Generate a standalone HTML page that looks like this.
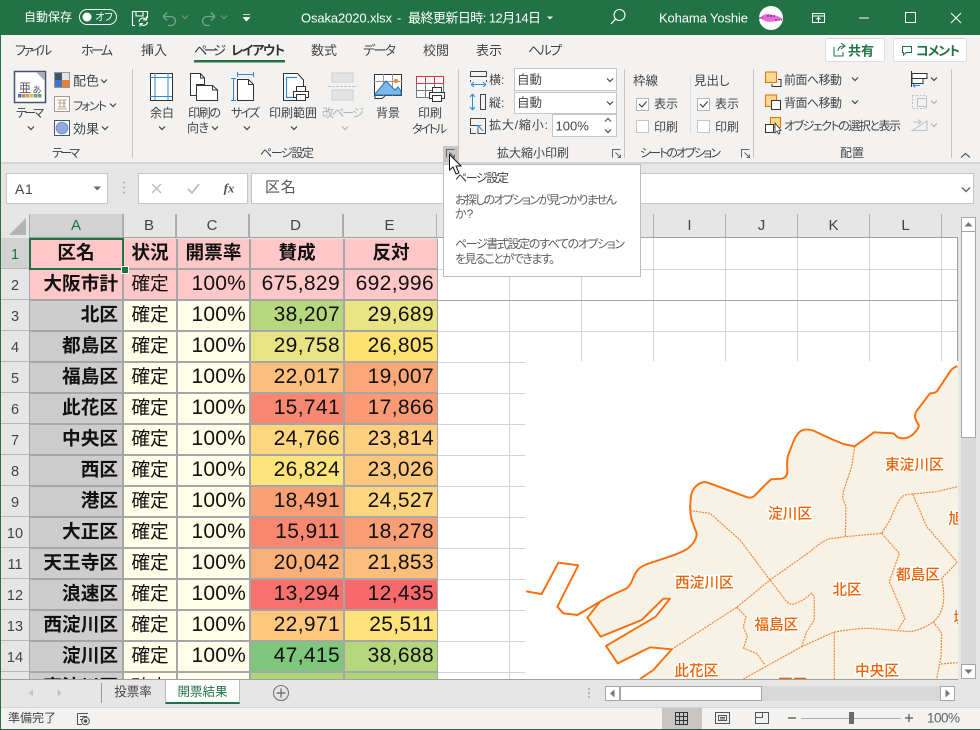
<!DOCTYPE html>
<html lang="ja"><head><meta charset="utf-8"><title>Osaka2020.xlsx</title>
<style>
html,body{margin:0;padding:0;width:980px;height:730px;overflow:hidden;background:#e6e6e6}
body{position:relative;font-family:"Liberation Sans","Noto Sans CJK JP",sans-serif}
svg{position:absolute;left:0;top:0;display:block}
svg text{font-family:"Liberation Sans","Noto Sans CJK JP",sans-serif;dominant-baseline:central;font-feature-settings:"palt";fill:#444;font-size:12px}
.m{text-anchor:middle}
.w{fill:#fff}
.g{fill:#b1b1b1}
.box{position:absolute;background:#fff;border:1px solid #c6c6c6;box-sizing:border-box}
#grid{position:absolute;left:30px;top:239px;width:408px;height:440px;overflow:hidden;background:#a6a6a6}
#cells{display:grid;grid-template-columns:92px 52px 71px 92px 92px;grid-auto-rows:29px;gap:2px;width:407px;margin-left:0}
#cells div{line-height:27px;white-space:nowrap;font-size:18.67px;color:#111;overflow:hidden;font-family:"Liberation Sans","Noto Sans CJK JP",sans-serif}
.k{background:#cdcdcd;font-weight:700;text-align:right;padding-right:4px}
.s{background:#ffffe9;text-align:center}
.p{background:#ffffe9;text-align:right;padding-right:3px;font-size:21px!important;letter-spacing:.2px}
.n{text-align:right;padding-right:3px;font-size:21px!important;letter-spacing:.35px}
.hd{background:#ffc7c7!important;font-weight:700;text-align:center;padding:0!important}
.pk{background:#ffc7c7!important}
.rh{position:absolute;left:1px;width:28px;height:31px;background:#e6e6e6;border-bottom:1px solid #b8b8b8;box-sizing:border-box;text-align:center;font-size:14.5px;line-height:35px;color:#444}
.ch{position:absolute;top:214px;height:24px;line-height:23px;text-align:center;font-size:15px;color:#444;background:#e6e6e6;border-right:1px solid #b0b0b0;box-sizing:border-box}
#tip{position:absolute;left:443px;top:164px;width:198px;height:113px;background:#fff;border:1px solid #bdbdbd;box-sizing:border-box}
</style></head>
<body>
<!-- ribbon + title background -->
<div style="position:absolute;left:0;top:0;width:980px;height:35px;background:#217346"></div>
<div style="position:absolute;left:0;top:35px;width:980px;height:127px;background:#f3f2f1"></div>
<div style="position:absolute;left:0;top:162px;width:980px;height:2px;background:#d4d4d4"></div>

<!-- formula bar -->
<div class="box" style="left:6px;top:173px;width:102px;height:31px;font-size:14px;line-height:30px;padding-left:8px;color:#444;letter-spacing:.6px">A1</div>
<div class="box" style="left:138px;top:173px;width:110px;height:31px"></div>
<div class="box" style="left:251px;top:173px;width:723px;height:31px;font-size:15px;line-height:27px;padding-left:13px;color:#555;letter-spacing:.8px">区名</div>

<!-- column headers -->
<div class="ch" style="left:30px;width:93px;background:#d2d2d2;color:#217346">A</div>
<div class="ch" style="left:123px;width:53px">B</div>
<div class="ch" style="left:176px;width:73px">C</div>
<div class="ch" style="left:249px;width:94px">D</div>
<div class="ch" style="left:343px;width:94px">E</div>
<div class="ch" style="left:437px;width:73px"></div>
<div class="ch" style="left:510px;width:72px"></div>
<div class="ch" style="left:582px;width:72px"></div>
<div class="ch" style="left:654px;width:72px">I</div>
<div class="ch" style="left:726px;width:72px">J</div>
<div class="ch" style="left:798px;width:72px">K</div>
<div class="ch" style="left:870px;width:72px">L</div>

<!-- row headers -->
<div class="rh" style="top:238px;background:#d2d2d2;color:#217346">1</div>
<div class="rh" style="top:269px">2</div>
<div class="rh" style="top:300px">3</div>
<div class="rh" style="top:331px">4</div>
<div class="rh" style="top:362px">5</div>
<div class="rh" style="top:393px">6</div>
<div class="rh" style="top:424px">7</div>
<div class="rh" style="top:455px">8</div>
<div class="rh" style="top:486px">9</div>
<div class="rh" style="top:517px">10</div>
<div class="rh" style="top:548px">11</div>
<div class="rh" style="top:579px">12</div>
<div class="rh" style="top:610px">13</div>
<div class="rh" style="top:641px">14</div>
<div class="rh" style="top:672px;height:8px"></div>

<!-- white sheet -->
<div style="position:absolute;left:438px;top:238px;width:520px;height:441px;background:#fff"></div>
<svg width="980" height="730" viewBox="0 0 980 730" style="pointer-events:none">
<g stroke="#d4d4d4" stroke-width="1">
<path d="M438 269.500H957M438 331.500H957M438 362.500H525M438 393.500H525M438 424.500H525M438 455.500H525M438 486.500H525M438 517.500H525M438 548.500H525M438 579.500H525M438 610.500H525M438 641.500H525M438 672.500H525"/>
<path d="M509.500 238V679M581.500 238V362M653.500 238V362M725.500 238V362M797.500 238V362M869.500 238V362M941.500 238V362"/>
</g>
<path d="M438 300.500H957" stroke="#a6a6a6" fill="none"/>
<path d="M29 237.500H958M957.500 238V679" stroke="#a0a0a0" fill="none"/>
<path d="M29.500 214V680" stroke="#a8a8a8" fill="none"/>
</svg>

<!-- data grid -->
<div id="grid"><div id="cells">
<div class="hd">区名</div><div class="hd">状況</div><div class="hd">開票率</div><div class="hd">賛成</div><div class="hd">反対</div>
<div class="k pk">大阪市計</div><div class="s pk">確定</div><div class="p pk">100%</div><div class="n pk">675,829</div><div class="n pk">692,996</div>
<div class="k">北区</div><div class="s">確定</div><div class="p">100%</div><div class="n" style="background:#b7d77f">38,207</div><div class="n" style="background:#e9e483">29,689</div>
<div class="k">都島区</div><div class="s">確定</div><div class="p">100%</div><div class="n" style="background:#e9e483">29,758</div><div class="n" style="background:#fde272">26,805</div>
<div class="k">福島区</div><div class="s">確定</div><div class="p">100%</div><div class="n" style="background:#fdc07c">22,017</div><div class="n" style="background:#fca777">19,007</div>
<div class="k">此花区</div><div class="s">確定</div><div class="p">100%</div><div class="n" style="background:#fa8771">15,741</div><div class="n" style="background:#fb9a75">17,866</div>
<div class="k">中央区</div><div class="s">確定</div><div class="p">100%</div><div class="n" style="background:#fed67e">24,766</div><div class="n" style="background:#fdcf7e">23,814</div>
<div class="k">西区</div><div class="s">確定</div><div class="p">100%</div><div class="n" style="background:#fde47b">26,824</div><div class="n" style="background:#fdc87d">23,026</div>
<div class="k">港区</div><div class="s">確定</div><div class="p">100%</div><div class="n" style="background:#fb9f75">18,491</div><div class="n" style="background:#fed47e">24,527</div>
<div class="k">大正区</div><div class="s">確定</div><div class="p">100%</div><div class="n" style="background:#fa8871">15,911</div><div class="n" style="background:#fb9d75">18,278</div>
<div class="k">天王寺区</div><div class="s">確定</div><div class="p">100%</div><div class="n" style="background:#fcb079">20,042</div><div class="n" style="background:#fdbd7b">21,853</div>
<div class="k">浪速区</div><div class="s">確定</div><div class="p">100%</div><div class="n" style="background:#f8716c">13,294</div><div class="n" style="background:#f8696b">12,435</div>
<div class="k">西淀川区</div><div class="s">確定</div><div class="p">100%</div><div class="n" style="background:#fdc77d">22,971</div><div class="n" style="background:#fee27a">25,511</div>
<div class="k">淀川区</div><div class="s">確定</div><div class="p">100%</div><div class="n" style="background:#7fc77d">47,415</div><div class="n" style="background:#b4d77e">38,688</div>
<div class="k">東淀川区</div><div class="s">確定</div><div class="p"></div><div class="n" style="background:#aed47d"></div><div class="n" style="background:#aed47d"></div>
</div></div>
<!-- selection -->
<div style="position:absolute;left:29px;top:238px;width:95px;height:32px;border:2px solid #217346;box-sizing:border-box"></div>
<div style="position:absolute;left:121px;top:266px;width:6px;height:6px;background:#217346;border:1px solid #fff"></div>

<!-- map -->
<svg width="448" height="319" viewBox="0 0 1344 957" style="left:510px;top:360px;overflow:hidden">
<rect x="45" y="3" width="1299" height="954" fill="#fff"/>
<path d="M1342 18Q1328 24 1322 32L1280 95Q1272 100 1260 100L1222 150Q1213 163 1215 172Q1218 183 1226 195Q1227 204 1218 213Q1208 226 1195 232Q1175 239 1160 230Q1155 222 1148 220L1092 217 1034 259 1000 252 960 235 910 212Q885 203 868 216Q855 232 850 245L833 290Q830 312 832 330Q834 352 815 356L783 358 760 380 735 406Q727 415 712 412L640 385 590 367Q570 363 552 385Q542 400 542 420Q538 450 545 480L560 520Q560 545 530 568Q512 578 490 586L430 606Q395 616 383 630Q375 640 368 658Q360 678 350 685L300 708 270 725 232 773 272 830 395 780 460 716 480 716 437 770 288 858 323 910 420 862 485 868 430 930 390 957 1344 957 1344 18Z" fill="#f6f3e6" stroke="none"/>
<g fill="none" stroke="#f98232" stroke-width="3.500" stroke-dasharray="6 3">
<path d="M1034 259 1025 320 1000 395 998 415 1008 440 1006 530"/>
<path d="M485 868 680 742 780 660 900 575Q930 548 955 537L1006 530 1115 520 1140 480Q1160 430 1175 410Q1190 402 1208 402L1280 395 1342 380"/>
<path d="M540 452 600 460 690 540 720 580 780 660 830 725Q840 735 850 733L880 720 905 700 913 710 913 780 890 815 875 860"/>
<path d="M1115 520 1168 580 1138 665 1185 775 1165 808"/>
<path d="M700 957 875 860 970 817Q1030 805 1080 805L1200 815Q1240 808 1270 785Q1292 768 1300 730 1304 700 1295 655L1342 607"/>
<path d="M1208 402 1250 500 1342 607"/>
<path d="M680 742 708 770 700 800 712 830 700 865 740 880 765 915"/>
<path d="M973 817V957"/>
<path d="M1270 785 1295 820 1293 890 1280 957M1293 912 1342 908"/>
</g>
<g fill="none" stroke="#fa6e0c" stroke-width="5.800" stroke-linejoin="round">
<path d="M1342 18Q1328 24 1322 32L1280 95Q1272 100 1260 100L1222 150Q1213 163 1215 172Q1218 183 1226 195Q1227 204 1218 213Q1208 226 1195 232Q1175 239 1160 230Q1155 222 1148 220L1092 217 1034 259 1000 252 960 235 910 212Q885 203 868 216Q855 232 850 245L833 290Q830 312 832 330Q834 352 815 356L783 358 760 380 735 406Q727 415 712 412L640 385 590 367Q570 363 552 385Q542 400 542 420Q538 450 545 480L560 520Q560 545 530 568Q512 578 490 586L430 606Q395 616 383 630Q375 640 368 658Q360 678 350 685L300 708 270 725 232 773 272 830 395 780 460 716 480 716 437 770 288 858 323 910 420 862 485 868 430 930 390 957"/>
<path d="M48 694 95 702 145 608 205 616 142 740 160 760 202 765 270 725"/>
</g>
<g style="text-anchor:middle;paint-order:stroke;stroke:#fff;stroke-width:9px;stroke-linejoin:round">
<text x="1213" y="316" style="font-size:44px;font-weight:500;fill:#ef6205">東淀川区</text>
<text x="840" y="463" style="font-size:44px;font-weight:500;fill:#ef6205">淀川区</text>
<text x="583" y="670" style="font-size:44px;font-weight:500;fill:#ef6205">西淀川区</text>
<text x="1011" y="691" style="font-size:44px;font-weight:500;fill:#ef6205">北区</text>
<text x="1224" y="647" style="font-size:44px;font-weight:500;fill:#ef6205">都島区</text>
<text x="799" y="796" style="font-size:44px;font-weight:500;fill:#ef6205">福島区</text>
<text x="559" y="934" style="font-size:44px;font-weight:500;fill:#ef6205">此花区</text>
<text x="1101" y="934" style="font-size:44px;font-weight:500;fill:#ef6205">中央区</text>
<text x="1337" y="478" style="font-size:44px;font-weight:500;fill:#ef6205">旭</text>
<text x="1352" y="775" style="font-size:44px;font-weight:500;fill:#ef6205">城</text>
<text x="848" y="976" style="font-size:44px;font-weight:500;fill:#ef6205">西区</text>
</g>
</svg>

<!-- tooltip -->
<div id="tip"></div>

<!-- bottom bars -->
<div style="position:absolute;left:0;top:679px;width:980px;height:1px;background:#a0a0a0"></div>
<div style="position:absolute;left:0;top:680px;width:980px;height:27px;background:#e6e6e6"></div>
<div style="position:absolute;left:0;top:707px;width:980px;height:22px;background:#f3f2f1;border-top:1px solid #d4d4d4;box-sizing:border-box"></div>
<div style="position:absolute;left:165px;top:680px;width:75px;height:24px;background:#fff;border-left:1px solid #bbb;border-right:1px solid #bbb;border-bottom:2px solid #217346;box-sizing:border-box"></div>
<div style="position:absolute;left:605px;top:686px;width:350px;height:15px;background:#d9d9d9"></div>
<div class="box" style="left:605px;top:686px;width:15px;height:15px;border-color:#a6a6a6"></div>
<div class="box" style="left:620px;top:686px;width:142px;height:15px;border-color:#a6a6a6"></div>
<div class="box" style="left:940px;top:686px;width:15px;height:15px;border-color:#a6a6a6"></div>
<!-- vertical scrollbar -->
<div style="position:absolute;left:958px;top:214px;width:22px;height:466px;background:#e6e6e6"></div>
<div style="position:absolute;left:961px;top:217px;width:15px;height:462px;background:#d9d9d9"></div>
<div class="box" style="left:961px;top:217px;width:15px;height:15px;border-color:#a6a6a6"></div>
<div class="box" style="left:961px;top:231px;width:15px;height:207px;border-color:#a6a6a6"></div>
<div class="box" style="left:961px;top:664px;width:15px;height:15px;border-color:#a6a6a6"></div>
<div style="position:absolute;left:662px;top:708px;width:40px;height:21px;background:#c8c6c4"></div>

<!-- everything else -->
<svg width="980" height="730" viewBox="0 0 980 730">
<defs>
<path id="c" d="M-3-1.500 0 1.500 3-1.500" fill="none" stroke="#444" stroke-width="1.200"/>
<path id="cg" d="M-3-1.500 0 1.500 3-1.500" fill="none" stroke="#b1b1b1" stroke-width="1.200"/>
<g id="pr" stroke="#333" fill="#fff"><rect x="-4.500" y="-7.500" width="9" height="5"/><rect x="-7.500" y="-2.500" width="15" height="6"/><rect x="-4.500" y=".500" width="9" height="6"/></g>
<g id="dl" fill="none" stroke="#666"><path d="M-4.500 3.500V-4.500H3.500"/><path d="M-1.500-1.500 3.500 3.500M3.500 .500V3.500H.500"/></g>
</defs>

<!-- window border -->
<path d="M.500 35V730" stroke="#217346"/>
<path d="M0 729.500H980" stroke="#217346"/>

<!-- TITLE BAR -->
<text x="24" y="17" class="w" textLength="48" style="font-size:12px">自動保存</text>
<rect x="79.500" y="9.500" width="37" height="15" rx="7.500" fill="none" stroke="#fff"/>
<circle cx="87" cy="17" r="4.500" fill="#fff"/>
<text x="104" y="18" class="w m" style="font-size:10px">オフ</text>
<path d="M132.500 11.500H147.500V18M135 25.500H132.500V11.500M136 11.500V16H143V11.500" fill="none" stroke="#fff" stroke-width="1.100"/>
<path d="M139 22a4 4 0 0 1 7-2.500M147.500 22a4 4 0 0 1-7 2M146.500 16.500V20H143M140 26.500V23.500H143" fill="none" stroke="#fff" stroke-width="1.100"/>
<path d="M163 16.500 167 12.500M163 16.500 167 20.500M163 16.500H171a4.500 4.500 0 0 1 0 9H168" fill="none" stroke="#7aa58d" stroke-width="1.300"/>
<use href="#cg" x="185" y="17" style="opacity:.6"/>
<path d="M215 16.500 211 12.500M215 16.500 211 20.500M215 16.500H207a4.500 4.500 0 0 0 0 9H210" fill="none" stroke="#7aa58d" stroke-width="1.300"/>
<use href="#cg" x="224" y="17" style="opacity:.6"/>
<path d="M243 14.500H250M243.500 17.500H249.500L246.500 21Z" fill="#fff" stroke="#fff" stroke-width=".8"/>
<text x="301" y="18" class="w" textLength="91" style="font-size:13px">Osaka2020.xlsx</text>
<text x="397" y="18" class="w" style="font-size:13px">-</text>
<text x="408" y="18" class="w" textLength="133" style="font-size:13px">最終更新日時: 12月14日</text>
<path d="M547 16.500H553L550 19.500Z" fill="#fff"/>
<circle cx="619.500" cy="15" r="5.500" fill="none" stroke="#fff" stroke-width="1.100"/>
<path d="M615.500 19 611 24" stroke="#fff" stroke-width="1.300"/>
<text x="659" y="18" class="w" textLength="89" style="font-size:13px">Kohama Yoshie</text>
<circle cx="771" cy="18" r="12" fill="#fff"/>
<path d="M760 18C763 14 768 13 772 15 776 15 780 17 783 19 778 21 770 23 765 21Z" fill="#ee66dd"/>
<path d="M759 18H763M767 16H775M775 20H782" stroke="#333" stroke-dasharray="2 1"/>
<path d="M812.500 13.500H824.500V22.500H812.500ZM812.500 16H824.500M818.500 22V18M816.500 19.500 818.500 17.500 820.500 19.500" fill="none" stroke="#fff" stroke-width="1"/>
<path d="M859 18H869" stroke="#fff"/>
<rect x="905.500" y="12.500" width="10" height="10" fill="none" stroke="#fff"/>
<path d="M951 13 961 23M961 13 951 23" stroke="#fff"/>

<!-- TABS -->
<text x="15" y="50.500" textLength="37" style="font-size:13px">ファイル</text>
<text x="81" y="50.500" textLength="32" style="font-size:13px">ホーム</text>
<text x="141" y="50.500" textLength="26" style="font-size:13px">挿入</text>
<text x="194" y="50.500" textLength="32" style="font-size:13px;fill:#333">ページ</text>
<text x="231" y="50.500" textLength="54" style="font-size:13px;fill:#333;font-weight:700">レイアウト</text>
<text x="311" y="50.500" textLength="26" style="font-size:13px">数式</text>
<text x="363" y="50.500" textLength="33" style="font-size:13px">データ</text>
<text x="423" y="50.500" textLength="26" style="font-size:13px">校閲</text>
<text x="476" y="50.500" textLength="26" style="font-size:13px">表示</text>
<text x="528" y="50.500" textLength="34" style="font-size:13px">ヘルプ</text>
<rect x="194" y="60" width="91" height="2.500" fill="#217346"/>
<rect x="825.500" y="38.500" width="59" height="23" rx="2" fill="#fff" stroke="#dcdcdc"/>
<rect x="893.500" y="38.500" width="73" height="23" rx="2" fill="#fff" stroke="#dcdcdc"/>
<path d="M834 47V56H843V52M838 51C838 47 841 46 844 46M841 43 845 46 841 49" fill="none" stroke="#217346" stroke-width="1"/>
<text x="848" y="51" style="font-size:13px;font-weight:700;fill:#217346">共有</text>
<path d="M902.500 46.500H911.500V52.500H906L903.500 55V52.500H902.500Z" fill="none" stroke="#217346"/>
<text x="916" y="51" textLength="44" style="font-size:13px;font-weight:700;fill:#217346">コメント</text>

<!-- separators -->
<path d="M132.500 69V158M458.500 69V158M624.500 69V158M753.500 69V158M951.500 69V158" stroke="#c8c6c4"/>
<path d="M690.500 75V134" stroke="#dcdcdc"/>

<!-- THEME GROUP -->
<rect x="14.500" y="71.500" width="31" height="31" fill="#fff" stroke="#44546a" stroke-width="1.500"/>
<path d="M36 72H45V81Z" fill="#aab"/>
<text x="25" y="88" class="m" style="font-size:12px;fill:#556">亜</text>
<text x="37" y="90" class="m" style="font-size:9px;fill:#556">あ</text>
<rect x="18" y="94" width="3.500" height="3.500" fill="#4472c4"/><rect x="22" y="94" width="3.500" height="3.500" fill="#ed7d31"/><rect x="26" y="94" width="3.500" height="3.500" fill="#a5a5a5"/><rect x="30" y="94" width="3.500" height="3.500" fill="#ffc000"/><rect x="34" y="94" width="3.500" height="3.500" fill="#5b9bd5"/><rect x="38" y="94" width="3.500" height="3.500" fill="#70ad47"/>
<text x="16" y="113" textLength="28">テーマ</text><use href="#c" x="31" y="128"/>
<text x="52" y="153" textLength="28">テーマ</text>
<rect x="54.500" y="72.500" width="15" height="15" fill="#fff" stroke="#9a9a9a"/>
<rect x="55" y="73" width="7" height="7" fill="#44546a"/><rect x="62" y="73" width="7" height="7" fill="#e7e6e6"/><rect x="55" y="80" width="7" height="7" fill="#4472c4"/><rect x="62" y="80" width="7" height="7" fill="#ed7d31"/>
<text x="73" y="81" style="font-size:13px">配色</text><use href="#c" x="104" y="81"/>
<rect x="54.500" y="96.500" width="15" height="15" fill="#fff" stroke="#9a9a9a"/>
<path d="M57 100H67M58 103H66M58 107H66M57 109H67M60 100V107" stroke="#c9a27a" fill="none"/><path d="M64 100V107" stroke="#6f8fce" fill="none"/>
<text x="73" y="106" textLength="34" style="font-size:12px">フォント</text><use href="#c" x="113" y="105"/>
<rect x="54.500" y="120.500" width="15" height="15" fill="#fff" stroke="#44546a"/>
<circle cx="62" cy="128" r="5.800" fill="#8ea9db" stroke="#6f8fce"/>
<text x="73" y="129" style="font-size:13px">効果</text><use href="#c" x="105" y="128"/>

<!-- PAGE SETUP -->
<rect x="150.500" y="73.500" width="22" height="27" fill="#fff" stroke="#333"/>
<path d="M155 73V100M168 73V100M150 77.500H172M150 96.500H172" stroke="#2b8cd6" fill="none"/>
<text x="162" y="113" class="m">余白</text><use href="#c" x="162" y="128"/>
<path d="M190.500 73.500H200.500L204.500 78V84.500H196.500V95.500H190.500Z" fill="#fff" stroke="#333"/>
<path d="M200.500 73.500V78H204.500" fill="none" stroke="#333"/>
<path d="M196.500 85.500H212.500L217.500 90V100.500H196.500Z" fill="#fff" stroke="#333"/>
<path d="M212.500 85.500V90H217.500" fill="none" stroke="#333"/>
<text x="188" y="113" textLength="33">印刷の</text>
<text x="187" y="128" textLength="22">向き</text><use href="#c" x="215" y="128"/>
<path d="M233.500 78V100M231 78.500H236M231 100.500H236M237 74.500H254M237.500 72V77M253.500 72V77" stroke="#2b8cd6" fill="none"/>
<path d="M237.500 79.500H248.500L253.500 84.500V100.500H237.500Z" fill="#fff" stroke="#333"/>
<path d="M248.500 79.500V84.500H253.500" fill="none" stroke="#333"/>
<text x="231" y="113" textLength="29">サイズ</text><use href="#c" x="247" y="128"/>
<path d="M283.500 73.500H297.500L303.500 80V100.500H283.500Z" fill="#fff" stroke="#333"/>
<path d="M297 77.500H286.500V97.500H294" fill="none" stroke="#2b8cd6" stroke-width="1.200"/>
<use href="#pr" x="301" y="94"/>
<text x="293" y="113" class="m">印刷範囲</text><use href="#c" x="294" y="128"/>
<rect x="332" y="73" width="21" height="9" fill="#e4e4e4" stroke="#cfcfcf"/>
<path d="M328 86.500H357" stroke="#c0c0c0" stroke-dasharray="3 1"/>
<rect x="332" y="90" width="21" height="10" fill="#e4e4e4" stroke="#cfcfcf"/>
<text x="322" y="113" class="g" textLength="42">改ページ</text><use href="#cg" x="345" y="128"/>
<rect x="374.500" y="74.500" width="27" height="21" fill="#fff" stroke="#333"/>
<path d="M374 81.500H402M383.500 74V96M392.500 74V96" stroke="#999" fill="none"/>
<path d="M375 94 386 81 395 90 398 87 401 91V95H375Z" fill="#7cb9e8" stroke="#2872b0"/>
<circle cx="396" cy="81" r="2" fill="#e8871e"/>
<path d="M375 96V98.500H382L385 96" fill="#fff" stroke="#333"/>
<text x="388" y="113" class="m">背景</text>
<rect x="416.500" y="76.500" width="27" height="21" fill="#fff" stroke="#777"/>
<path d="M416 90.500H432M425.500 83V98M434.500 83V88" stroke="#777" fill="none"/>
<path d="M416.500 76.500H443.500V83.500H416.500ZM425.500 76.500V83.500M434.500 76.500V83.500" fill="none" stroke="#e8343c"/>
<use href="#pr" x="437" y="95"/>
<text x="430" y="113" class="m">印刷</text>
<text x="412" y="129" textLength="35">タイトル</text>
<text x="260" y="153" textLength="54">ページ設定</text>
<rect x="443" y="146" width="16" height="16" fill="#c8c6c4"/>
<use href="#dl" x="451" y="154"/>

<!-- SCALE -->
<path d="M470.500 71.500H486.500M470.500 71.500V76.500H486.500V71.500M470.500 80V82M486.500 80V82" fill="none" stroke="#444"/>
<path d="M471 84.500H486M471 84.500 474 82M471 84.500 474 87M486 84.500 483 82M486 84.500 483 87" fill="none" stroke="#2b8cd6"/>
<text x="489" y="80">横:</text>
<path d="M472.500 94V110M472.500 94 470 97M472.500 94 475 97M472.500 110 470 107M472.500 110 475 107" fill="none" stroke="#2b8cd6"/>
<rect x="480.500" y="94.500" width="5" height="15" fill="none" stroke="#444"/>
<text x="489" y="103">縦:</text>
<path d="M470.500 118.500H485.500V133.500H478V125.500H470.500ZM470.500 118.500V125.500M470.500 128V133.500H476" fill="none" stroke="#444"/>
<path d="M483 131 478 125.500M478 129V125.500H481.500" fill="none" stroke="#2b8cd6"/>
<text x="489" y="125" textLength="59">拡大/縮小:</text>
<rect x="514.500" y="68.500" width="102" height="22" fill="#fff" stroke="#c6c6c6"/>
<rect x="514.500" y="92.500" width="102" height="21" fill="#fff" stroke="#c6c6c6"/>
<rect x="552.500" y="114.500" width="64" height="22" fill="#fff" stroke="#c6c6c6"/>
<text x="517" y="80" style="font-size:12.500px">自動</text><use href="#c" x="610" y="80"/>
<text x="517" y="103" style="font-size:12.500px">自動</text><use href="#c" x="610" y="103"/>
<text x="555.500" y="126" style="font-size:13px">100%</text>
<path d="M-3 1.500 0-1.500 3 1.500" transform="translate(608 120)" fill="none" stroke="#444"/>
<use href="#c" x="608" y="131"/>
<text x="533" y="153" class="m">拡大縮小印刷</text>
<use href="#dl" x="617" y="154"/>

<!-- SHEET OPTIONS -->
<text x="633" y="81" style="font-size:12.500px">枠線</text>
<text x="694" y="81" style="font-size:12.500px">見出し</text>
<rect x="636.500" y="98.500" width="12" height="12" fill="#fff" stroke="#b5b5b5"/>
<path d="M639 104 642 107 646.500 101.500" fill="none" stroke="#333"/>
<rect x="697.500" y="98.500" width="12" height="12" fill="#fff" stroke="#b5b5b5"/>
<path d="M700 104 703 107 707.500 101.500" fill="none" stroke="#333"/>
<rect x="636.500" y="120.500" width="12" height="12" fill="#fff" stroke="#c4c4c4"/>
<rect x="697.500" y="120.500" width="12" height="12" fill="#fff" stroke="#c4c4c4"/>
<text x="654" y="104">表示</text><text x="715" y="104">表示</text>
<text x="654" y="127">印刷</text><text x="715" y="127">印刷</text>
<text x="640" y="153" textLength="81">シートのオプション</text>
<use href="#dl" x="746" y="154"/>

<!-- ARRANGE -->
<rect x="765.500" y="72" width="11" height="10.500" fill="#fbd98c" stroke="#e07a10" stroke-width="1.100"/>
<path d="M778 79.500H781V86.500H772V84" fill="none" stroke="#333"/>
<text x="784" y="80" textLength="58">前面へ移動</text><use href="#c" x="855" y="79"/>
<rect x="765.500" y="95" width="11" height="11.500" fill="#fbd98c" stroke="#e07a10" stroke-width="1.100"/>
<rect x="771.500" y="100.500" width="9" height="9" fill="#fff" stroke="#333"/>
<text x="784" y="103" textLength="58">背面へ移動</text><use href="#c" x="855" y="102"/>
<rect x="770.500" y="117.500" width="10" height="10" fill="#fbd98c" stroke="#e07a10" stroke-width="1.100"/>
<rect x="765.500" y="124.500" width="8" height="8" fill="#fff" stroke="#333"/>
<path d="M775 123V133L777 131 778.500 134 780 133.500 778.800 130.500H781Z" fill="#fff" stroke="#333" stroke-width=".8"/>
<text x="784" y="126" textLength="117">オブジェクトの選択と表示</text>
<path d="M911.500 71V87" stroke="#333"/><rect x="912" y="73.500" width="15" height="5" fill="#fff" stroke="#333"/><rect x="912" y="78.500" width="11" height="5" fill="#fff" stroke="#333"/>
<path d="M913 85.500H920M913 85.500 915 83.500M913 85.500 915 87.500" fill="none" stroke="#2b8cd6"/>
<use href="#c" x="934" y="79"/>
<rect x="912.500" y="95.500" width="14" height="13" fill="none" stroke="#c0c0c0" stroke-dasharray="2 1.500"/>
<rect x="917.500" y="98.500" width="9" height="8" fill="none" stroke="#c0c0c0"/>
<use href="#cg" x="934" y="102"/>
<path d="M912 130.500 927 121V130.500ZM913 122H920M918 119.500 921 122 918 124.500" fill="none" stroke="#c0c0c0"/>
<use href="#cg" x="934" y="125"/>
<text x="852" y="153" class="m">配置</text>
<path d="M961 157.500 965.500 153.500 970 157.500" fill="none" stroke="#444" stroke-width="1.100"/>

<!-- FORMULA BAR ICONS -->
<path d="M93.500 186.500H101L97.250 190.500Z" fill="#666"/>
<path d="M123 182.500H125M123 187.500H125M123 192.500H125" stroke="#aaa" stroke-width="1.500"/>
<path d="M152 184 161 193M161 184 152 193" stroke="#bdbdbd" stroke-width="1.400"/>
<path d="M188 189 192 193 199 184" fill="none" stroke="#bdbdbd" stroke-width="1.800"/>
<text x="229" y="188" class="m" style="font-family:'Liberation Serif',serif;font-style:italic;font-weight:700;font-size:13px;fill:#555">fx</text>
<path d="M962 187.500 966 191.500 970 187.500" fill="none" stroke="#666" stroke-width="1.400"/>
<path d="M9 235H26V218Z" fill="#b4b4b4"/>
<path d="M123.500 214V238M176.500 214V238M249.500 214V238M343.500 214V238" stroke="#aaa"/>

<!-- TOOLTIP TEXT -->
<text x="455" y="178" textLength="54" style="font-size:12px;fill:#404040">ページ設定</text>
<text x="455" y="200" textLength="162" style="fill:#5f5f5f">お探しのオプションが見つかりません</text>
<text x="455" y="214" style="fill:#5f5f5f">か?</text>
<text x="455" y="244" textLength="170" style="fill:#5f5f5f">ページ書式設定のすべてのオプション</text>
<text x="455" y="259" textLength="100" style="fill:#5f5f5f">を見ることができます。</text>

<!-- CURSOR -->
<path d="M449.500 154.500V170L453 167 456 174 459 172.800 456 166H461Z" fill="#fff" stroke="#111" stroke-width="1"/>

<!-- SCROLLBAR GLYPHS -->
<path d="M964.500 226.500H972.500L968.500 222Z" fill="#777"/>
<path d="M964.500 669.500H972.500L968.500 674Z" fill="#777"/>
<path d="M614.500 689.500V697.500L610 693.500Z" fill="#777"/>
<path d="M945.500 689.500V697.500L950 693.500Z" fill="#777"/>

<!-- SHEET TABS -->
<path d="M33 689.500V696.500L28.500 693Z" fill="#c4c4c4"/>
<path d="M57.500 689.500V696.500L62 693Z" fill="#c4c4c4"/>
<path d="M101.500 683V703" stroke="#999"/>
<text x="133" y="692" class="m" style="font-size:12.500px">投票率</text>
<text x="202.500" y="692" class="m" style="font-size:12.500px;fill:#217346">開票結果</text>
<circle cx="281" cy="693" r="7.500" fill="none" stroke="#777" stroke-width="1.100"/>
<path d="M276.500 693H285.500M281 688.500V697.500" stroke="#777" stroke-width="1.400"/>
<path d="M589 688V690M589 692V694M589 696V698" stroke="#b5b5b5" stroke-width="2"/>

<!-- STATUS BAR -->
<text x="8" y="718">準備完了</text>
<path d="M77.500 713.500H88M77.500 713.500V724.500H82M80 716.500H87M80 719.500H83" fill="none" stroke="#555"/>
<circle cx="85.500" cy="721" r="3.800" fill="none" stroke="#555"/><circle cx="85.500" cy="721" r="1.800" fill="#555"/>
<path d="M675.500 712.500H687.500V724.500H675.500ZM679.500 712.500V724.500M683.500 712.500V724.500M675.500 716.500H687.500M675.500 720.500H687.500" fill="none" stroke="#333"/>
<path d="M715.500 712.500H729.500V723.500H715.500ZM718.500 715.500H726.500V720.500H718.500ZM720 717.500H725M720 719H725" fill="none" stroke="#555"/>
<path d="M755.500 712.500H768.500V723.500H755.500ZM762.500 712.500V717.500H755.500" fill="none" stroke="#555"/>
<path d="M788 718H796M905 718H913M909 714V722" stroke="#555" stroke-width="1.200"/>
<path d="M801 718.500H901" stroke="#aaa"/>
<rect x="849" y="712" width="5" height="12" fill="#6b6b6b"/>
<text x="927" y="718" textLength="33" style="font-size:13.500px;fill:#606060">100%</text>
</svg>
</body></html>
